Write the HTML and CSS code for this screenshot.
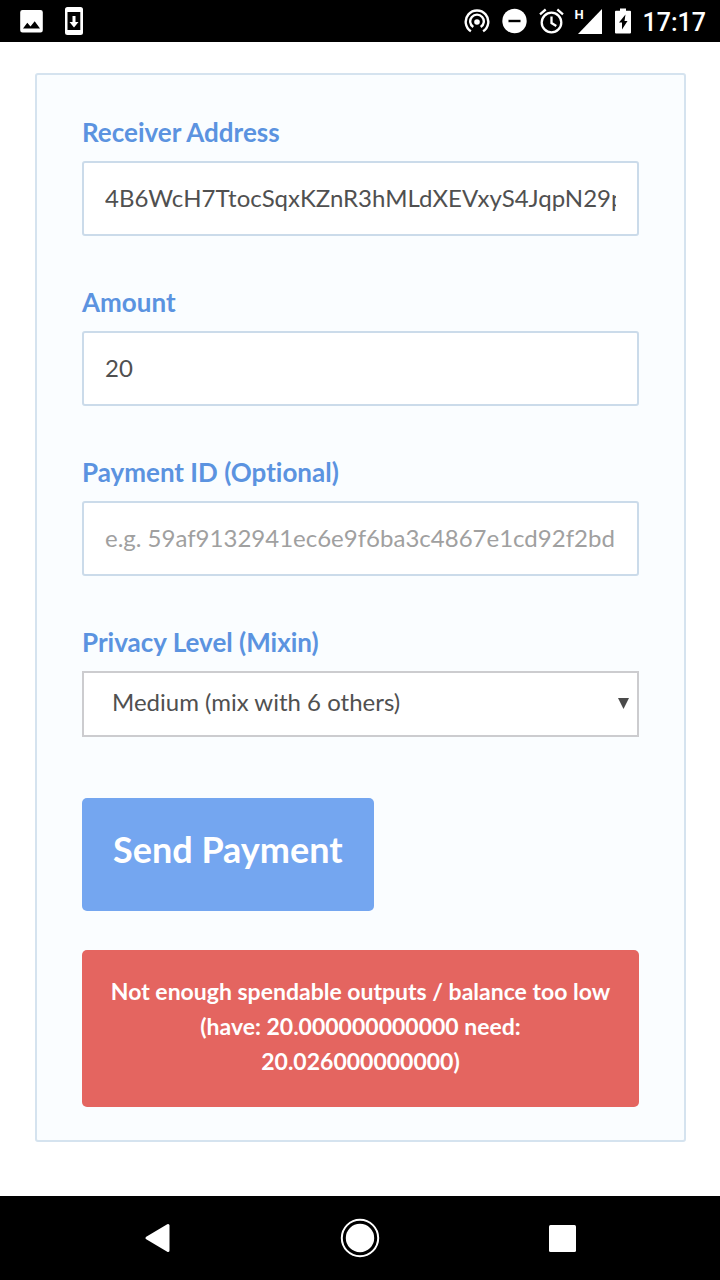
FILE: index.html
```html
<!DOCTYPE html>
<html lang="en">
<head>
<meta charset="utf-8">
<meta name="viewport" content="width=device-width, initial-scale=1">
<title>Send Payment</title>
<link rel="stylesheet" href="styles.css">
</head>
<body>
<div class="screen">
  <header class="status">
    <div class="status-group notices">
      <svg width="23" height="24" viewBox="0 0 23 24" fill="#fff" aria-hidden="true"><path fill-rule="evenodd" d="M2.500 1h18a2.300 2.300 0 0 1 2.300 2.300v18a2.300 2.300 0 0 1-2.300 2.300h-18A2.300 2.300 0 0 1 .2 21.300v-18A2.300 2.300 0 0 1 2.500 1zM3 19.500h17l-5.300-7.300-4.200 5.200-3.200-3.600z"/></svg>
      <svg width="18" height="28" viewBox="0 0 18 28" fill="#fff" aria-hidden="true"><path fill-rule="evenodd" d="M2.500 0h13A2.500 2.500 0 0 1 18 2.500v23a2.500 2.500 0 0 1-2.500 2.500h-13A2.500 2.500 0 0 1 0 25.500v-23A2.500 2.500 0 0 1 2.500 0zM2.500 5v18h12.800V5z"/><path d="M7.500 9h3v6h3L9 20.500 4.500 15h3z"/></svg>
    </div>
    <div class="status-group">
      <svg width="26" height="26" viewBox="0 0 26 26" fill="none" stroke="#fff" stroke-width="2.400" aria-hidden="true"><path d="M6.900 23.300a11.300 11.300 0 1 1 12.200 0M9.300 19.100a6.800 6.800 0 1 1 7.400 0"/><circle cx="13" cy="14" r="2.800" fill="#fff" stroke="none"/></svg>
      <svg width="25" height="26" viewBox="0 0 25 26" aria-hidden="true"><circle cx="12.500" cy="13" r="12.200" fill="#fff"/><path d="M6.500 13h12" stroke="#000" stroke-width="2.400"/></svg>
      <svg width="25" height="26" viewBox="0 0 25 26" fill="none" stroke="#fff" stroke-width="2.300" aria-hidden="true"><circle cx="12.500" cy="14.500" r="9.800"/><path d="M12.500 8.500v6.500l4.800 3M1 6.300l5.700-4.800M24 6.300l-5.700-4.800"/></svg>
      <div class="signal"><span>H</span><svg width="25" height="25" viewBox="0 0 25 25" fill="#fff" aria-hidden="true"><path d="M24 0v25H0z"/></svg></div>
      <svg width="16" height="26" viewBox="0 0 16 26" fill="#fff" aria-hidden="true"><path fill-rule="evenodd" d="M5 .5h6v2.300h4q1 0 1 1V24.500q0 1-1 1H1q-1 0-1-1V3.800q0-1 1-1h4zM10.500 6.500L4 14.500h3V21.500l5.500-8.500H9.500z"/></svg>
      <time class="clock">17:17</time>
    </div>
  </header>

  <main class="content">
    <form class="card">
      <div class="field">
        <label for="address">Receiver Address</label>
        <input id="address" type="text" value="4B6WcH7TtocSqxKZnR3hMLdXEVxyS4JqpN29p">
      </div>
      <div class="field">
        <label for="amount">Amount</label>
        <input id="amount" type="text" value="20">
      </div>
      <div class="field">
        <label for="payment-id">Payment ID (Optional)</label>
        <input id="payment-id" type="text" placeholder="e.g. 59af9132941ec6e9f6ba3c4867e1cd92f2bd5">
      </div>
      <div class="field">
        <label for="mixin">Privacy Level (Mixin)</label>
        <div class="select">
          <select id="mixin"><option>Medium (mix with 6 others)</option></select>
          <svg class="arrow" width="11" height="11" viewBox="0 0 11 11" fill="#4a4a4a" aria-hidden="true"><path d="M0 0h11L5.500 11z"/></svg>
        </div>
      </div>
      <button class="send" type="button">Send Payment</button>
      <p class="alert" role="alert">Not enough spendable outputs / balance too low (have: 20.000000000000 need: 20.026000000000)</p>
    </form>
  </main>

  <nav class="navbar">
    <button type="button" aria-label="Back"><svg width="26" height="30" viewBox="0 0 26 30" fill="#fff" stroke="#fff" stroke-width="3" stroke-linejoin="round"><path d="M3 15L24 2.500v25z"/></svg></button>
    <button type="button" aria-label="Home"><svg width="40" height="40" viewBox="0 0 40 40"><circle cx="20" cy="20" r="18.200" fill="none" stroke="#fff" stroke-width="2"/><circle cx="20" cy="20" r="14.200" fill="#fff"/></svg></button>
    <button type="button" aria-label="Recent apps"><svg width="27" height="27" viewBox="0 0 27 27" fill="#fff"><rect width="27" height="27" rx="1.500"/></svg></button>
  </nav>
</div>
</body>
</html>
```
FILE: styles.css
```css
* {
  box-sizing: border-box;
}

body {
  margin: 0;
  background: #fff;
  font-family: Lato, "Liberation Sans", sans-serif;
  font-variant-ligatures: none;
}

svg {
  display: block;
  flex: none;
}

.screen {
  display: flex;
  flex-direction: column;
  min-height: 100vh;
}

.status {
  display: flex;
  justify-content: space-between;
  align-items: center;
  height: 42px;
  padding: 0 14px 0 20px;
  background: #000;
  color: #fff;
}

.status-group {
  display: flex;
  align-items: center;
  gap: 12px;
}

.notices {
  gap: 22px;
}

.signal {
  display: flex;
  align-items: flex-start;
  margin-left: -2px;
}

.signal span {
  margin-right: -6px;
  font: 700 13px/11px Roboto, sans-serif;
}

.clock {
  padding-top: 3px;
  font: 500 25px/39px Roboto, sans-serif;
}

.content {
  flex: 1;
  padding: 31px 34px 54px 35px;
}

.card {
  padding: 39px 45px 33px;
  border: 2px solid #d5e3ef;
  border-radius: 3px;
  background: #fafdff;
}

.field {
  margin-bottom: 48px;
}

.field label {
  display: block;
  margin-bottom: 11px;
  color: #5b93e0;
  font-size: 26px;
  font-weight: 700;
  line-height: 36px;
}

.field input,
.field select {
  display: block;
  width: 100%;
  margin: 0;
  background: #fff;
  color: #505050;
  font: 24px/30px Lato, "Liberation Sans", sans-serif;
  outline: none;
}

.field input {
  height: 75px;
  padding: 0 21px 2px;
  border: 2px solid #cbdbea;
  border-radius: 3px;
}

.field input::placeholder {
  color: #a0a0a0;
  opacity: 1;
}

.select {
  position: relative;
}

.field select {
  height: 66px;
  padding: 0 28px 4px;
  border: 2px solid #cccccf;
  border-radius: 0;
  appearance: none;
}

.arrow {
  position: absolute;
  top: 27px;
  right: 10px;
  pointer-events: none;
}

.send {
  display: block;
  margin: 61px 0 39px;
  padding: 30px 31px 40px;
  border: 0;
  border-radius: 5px;
  background: #74a6f0;
  color: #fff;
  font: 700 36px/43px Lato, "Liberation Sans", sans-serif;
}

.alert {
  margin: 0;
  padding: 24px 20px 28px;
  border-radius: 5px;
  background: #e46560;
  color: #fff;
  font-size: 23px;
  font-weight: 700;
  line-height: 35px;
  text-align: center;
}

.navbar {
  display: grid;
  grid-template-columns: repeat(3, 1fr);
  height: 84px;
  padding: 0 56px;
  background: #000;
}

.navbar button {
  display: flex;
  align-items: center;
  justify-content: center;
  padding: 0;
  border: 0;
  background: none;
}
```
